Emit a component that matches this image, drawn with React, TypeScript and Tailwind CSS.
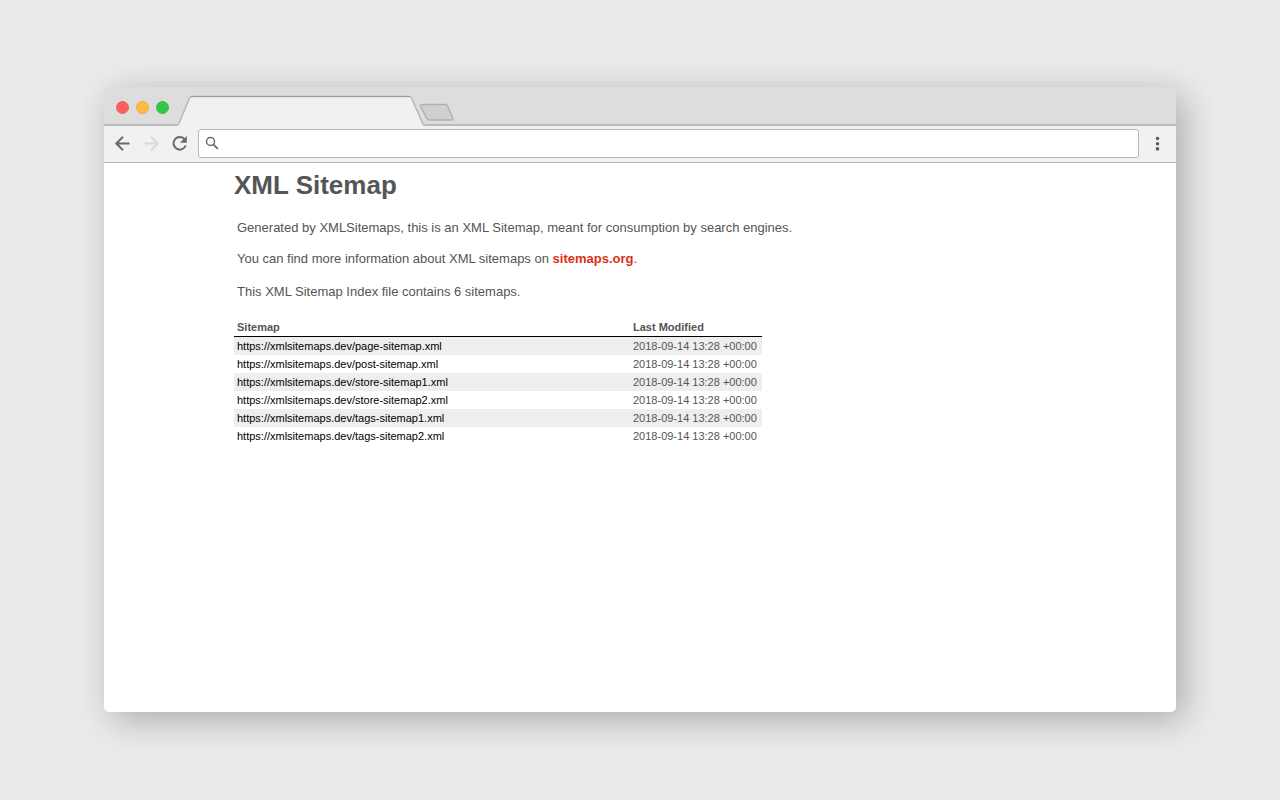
const sitemaps = [
  "page-sitemap",
  "post-sitemap",
  "store-sitemap1",
  "store-sitemap2",
  "tags-sitemap1",
  "tags-sitemap2",
];

function TabStrip() {
  return (
    <div className="flex h-[39px] items-stretch bg-[#dddddd]">
      <div className="flex w-[73px] items-center gap-[7px] border-b-2 border-[#bcbcbc] pl-3 pt-[3px]">
        <button aria-label="Close" className="size-[13px] shrink-0 rounded-full border border-[#f0625e] bg-[#fc605c]" />
        <button aria-label="Minimize" className="size-[13px] shrink-0 rounded-full border border-[#e9ad44] bg-[#fdbc40]" />
        <button aria-label="Maximize" className="size-[13px] shrink-0 rounded-full border border-[#38bd4a] bg-[#34c84a]" />
      </div>
      <svg className="w-[248px] shrink-0" height="39" viewBox="0 0 248 39" aria-hidden="true">
        <path d="M0 39 L1 38 L13 9.500 H234 L247 38 L248 39 Z" fill="#f1f1f1" />
        <path d="M0 38 C1 38 1.500 37.500 2 36.500 L12.500 11 C13 10 13.500 9.500 14.500 9.500 H232.500 C233.500 9.500 234 10 234.500 11 L245.500 36 C246 37.300 247 38 248 38" fill="none" stroke="#b9b9b9" strokeWidth="1.600" />
        <path d="M14 9.500 H233" stroke="#9c9c9c" strokeWidth="1" />
      </svg>
      <div className="min-w-0 flex-1 border-b-2 border-[#bcbcbc] pt-4">
        <button aria-label="New tab" className="-ml-[6px] block">
          <svg width="36" height="19" viewBox="0 0 36 19" aria-hidden="true">
            <path d="M3 1.500 H26.500 Q28 1.500 28.600 3 L34 15.500 Q34.500 17 33 17 H10 Q8.500 17 7.800 15.500 L1.500 3 Q1 1.500 3 1.500 Z" fill="#d0d0d0" stroke="#b0b0b0" strokeWidth="1.400" />
          </svg>
        </button>
      </div>
    </div>
  );
}

function Toolbar() {
  return (
    <div className="flex h-[37px] items-center border-b border-[#b9b9b9] bg-[#f1f1f1] px-[10px] pb-[2px]">
      <button aria-label="Back" className="mr-3">
        <svg width="17" height="17" viewBox="0 0 17 17" fill="none" stroke="#6a6a6a" strokeWidth="2" aria-hidden="true">
          <path d="M15.500 8.500H2.500M9 1.800L2.300 8.500L9 15.200" />
        </svg>
      </button>
      <button aria-label="Forward" disabled className="mr-[11px]">
        <svg width="17" height="17" viewBox="0 0 17 17" fill="none" stroke="#dadada" strokeWidth="2" aria-hidden="true">
          <path d="M1.500 8.500H14.500M8 1.800L14.700 8.500L8 15.200" />
        </svg>
      </button>
      <button aria-label="Reload" className="mr-[10px]">
        <svg width="17" height="17" viewBox="0 0 17 17" aria-hidden="true">
          <path d="M13.800 4.500A6.300 6.300 0 1 0 14.700 10.500" fill="none" stroke="#6a6a6a" strokeWidth="2" />
          <path d="M15.800 1V7.800H9Z" fill="#6a6a6a" />
        </svg>
      </button>
      <label className="flex h-[29px] min-w-0 flex-1 items-center rounded-[3px] border border-[#b9b9b9] bg-white pl-[6px]">
        <svg className="shrink-0" width="14" height="14" viewBox="0 0 14 14" fill="none" stroke="#6a6a6a" aria-hidden="true">
          <circle cx="5.500" cy="5.500" r="4" strokeWidth="1.500" />
          <path d="M8.300 8.300L12.800 12.800" strokeWidth="1.900" />
        </svg>
        <input aria-label="Address" type="text" className="min-w-0 flex-1 bg-transparent px-2 text-[13px] outline-none" />
      </label>
      <button aria-label="Menu" className="ml-[10px]">
        <svg width="17" height="17" viewBox="0 0 17 17" fill="#5f5f5f" aria-hidden="true">
          <circle cx="8.500" cy="3.500" r="1.800" />
          <circle cx="8.500" cy="8.700" r="1.800" />
          <circle cx="8.500" cy="13.900" r="1.800" />
        </svg>
      </button>
    </div>
  );
}

export default function App() {
  return (
    <div className="flex min-h-screen flex-col bg-[#ebebeb] px-[104px] pb-[88px] pt-[87px] font-['Liberation_Sans',Arial,sans-serif]">
      <div className="flex flex-1 flex-col overflow-hidden rounded-[5px] bg-white shadow-[8px_8px_36px_rgba(0,0,0,0.28)]">
        <TabStrip />
        <Toolbar />
        <main className="flex-1 pl-[130px] pr-6 pt-[6px] text-[13px] leading-4 text-[#555555]">
          <h1 className="mb-[19px] text-[26px] font-bold leading-8">XML Sitemap</h1>
          <div className="px-[3px]">
            <p className="mb-[15px]">
              Generated by XMLSitemaps, this is an XML Sitemap, meant for consumption by search engines.
            </p>
            <p className="mb-[17px]">
              You can find more information about XML sitemaps on{" "}
              <a href="https://sitemaps.org" className="font-bold text-[#da3114]">sitemaps.org</a>.
            </p>
            <p className="mb-[18px]">This XML Sitemap Index file contains 6 sitemaps.</p>
          </div>
          <table className="w-[528px] table-fixed border-collapse text-[11px] leading-[18px]">
            <thead>
              <tr className="border-b border-black text-left">
                <th className="px-[3px] py-0 font-bold">Sitemap</th>
                <th className="w-[132px] px-[3px] py-0 font-bold">Last Modified</th>
              </tr>
            </thead>
            <tbody>
              {sitemaps.map((name) => (
                <tr key={name} className="odd:bg-[#eeeeee]">
                  <td className="px-[3px] py-0 text-black">
                    <a href={`https://xmlsitemaps.dev/${name}.xml`}>{`https://xmlsitemaps.dev/${name}.xml`}</a>
                  </td>
                  <td className="whitespace-nowrap px-[3px] py-0">2018-09-14 13:28 +00:00</td>
                </tr>
              ))}
            </tbody>
          </table>
        </main>
      </div>
    </div>
  );
}
